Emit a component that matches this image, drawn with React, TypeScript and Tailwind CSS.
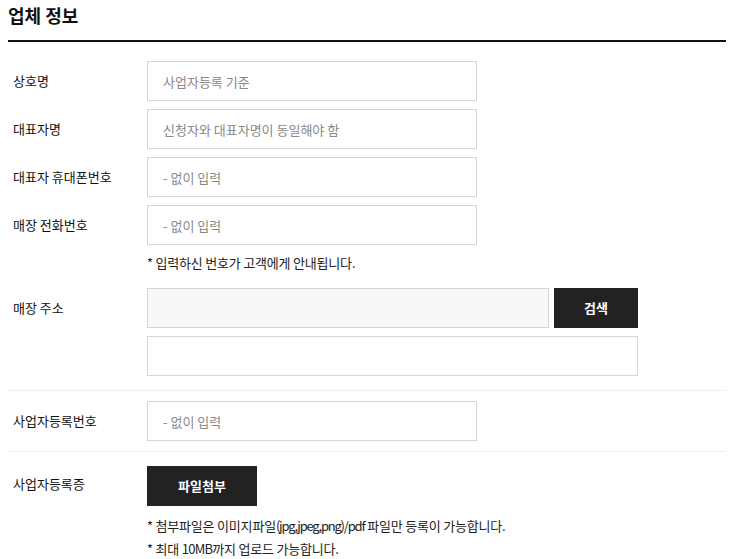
const font = { fontFamily: '"Noto Sans CJK KR", "Noto Sans", sans-serif' };

const Field = ({ placeholder, width = "w-[330px]", gray = false }: { placeholder?: string; width?: string; gray?: boolean }) => {
  return (
    <input
      type="text"
      placeholder={placeholder}
      className={`h-[40px] ${width} border border-[#d5d5d5] px-[15px] text-[13px] text-[#222] placeholder:text-[#888] outline-none ${
        gray ? "bg-[#f7f8fa]" : "bg-white"
      }`}
    />
  );
};

const Row = ({ label, children }: { label: string; children: React.ReactNode }) => {
  return (
    <div className="flex items-center">
      <span className="w-[139px] pl-[5px] text-[13px] text-[#111]">{label}</span>
      {children}
    </div>
  );
};

const App = () => {
  return (
    <div className="min-h-[559px] bg-white pl-2 pr-3" style={font}>
      <h2 className="border-b-2 border-[#111] pb-[10px] text-[18px] font-bold leading-[30px] text-[#111]">
        업체 정보
      </h2>

      <div className="flex flex-col gap-2 pt-[19px]">
        <Row label="상호명">
          <Field placeholder="사업자등록 기준" />
        </Row>
        <Row label="대표자명">
          <Field placeholder="신청자와 대표자명이 동일해야 함" />
        </Row>
        <Row label="대표자 휴대폰번호">
          <Field placeholder="- 없이 입력" />
        </Row>
        <Row label="매장 전화번호">
          <Field placeholder="- 없이 입력" />
        </Row>
      </div>
      <div className="ml-[139px] mt-[9px]">
        <p className="text-[13px] leading-[18px] text-[#222] tracking-[-0.2px]">* 입력하신 번호가 고객에게 안내됩니다.</p>
      </div>

      <div className="mt-[16px] flex flex-col gap-2 pb-[14px]">
        <Row label="매장 주소">
          <div className="flex gap-[5px]">
            <Field width="w-[402px]" gray />
            <button className="h-[40px] w-[84px] bg-[#222] text-[13px] font-bold text-white">검색</button>
          </div>
        </Row>
        <div className="ml-[139px]">
          <Field width="w-[491px]" />
        </div>
      </div>

      <div className="border-t border-[#eee] py-[10px]">
        <Row label="사업자등록번호">
          <Field placeholder="- 없이 입력" />
        </Row>
      </div>

      <div className="flex border-t border-[#eee] pt-[14px]">
        <span className="w-[139px] pl-[5px] pt-[8px] text-[13px] text-[#111]">사업자등록증</span>
        <div className="flex flex-col items-start">
          <button className="h-[40px] w-[110px] bg-[#222] text-[13px] font-bold text-white">파일첨부</button>
          <div className="mt-[8px] text-[13px] leading-[23px] text-[#222] tracking-[-0.2px]">
            <p>
              * 첨부파일은 이미지파일<span className="tracking-[-1.2px]">(jpg,jpeg,png)/pdf</span> 파일만 등록이 가능합니다.
            </p>
            <p>
              * 최대 <span className="tracking-[-0.8px]">10MB</span>까지 업로드 가능합니다.
            </p>
          </div>
        </div>
      </div>
    </div>
  );
};

export default App;
